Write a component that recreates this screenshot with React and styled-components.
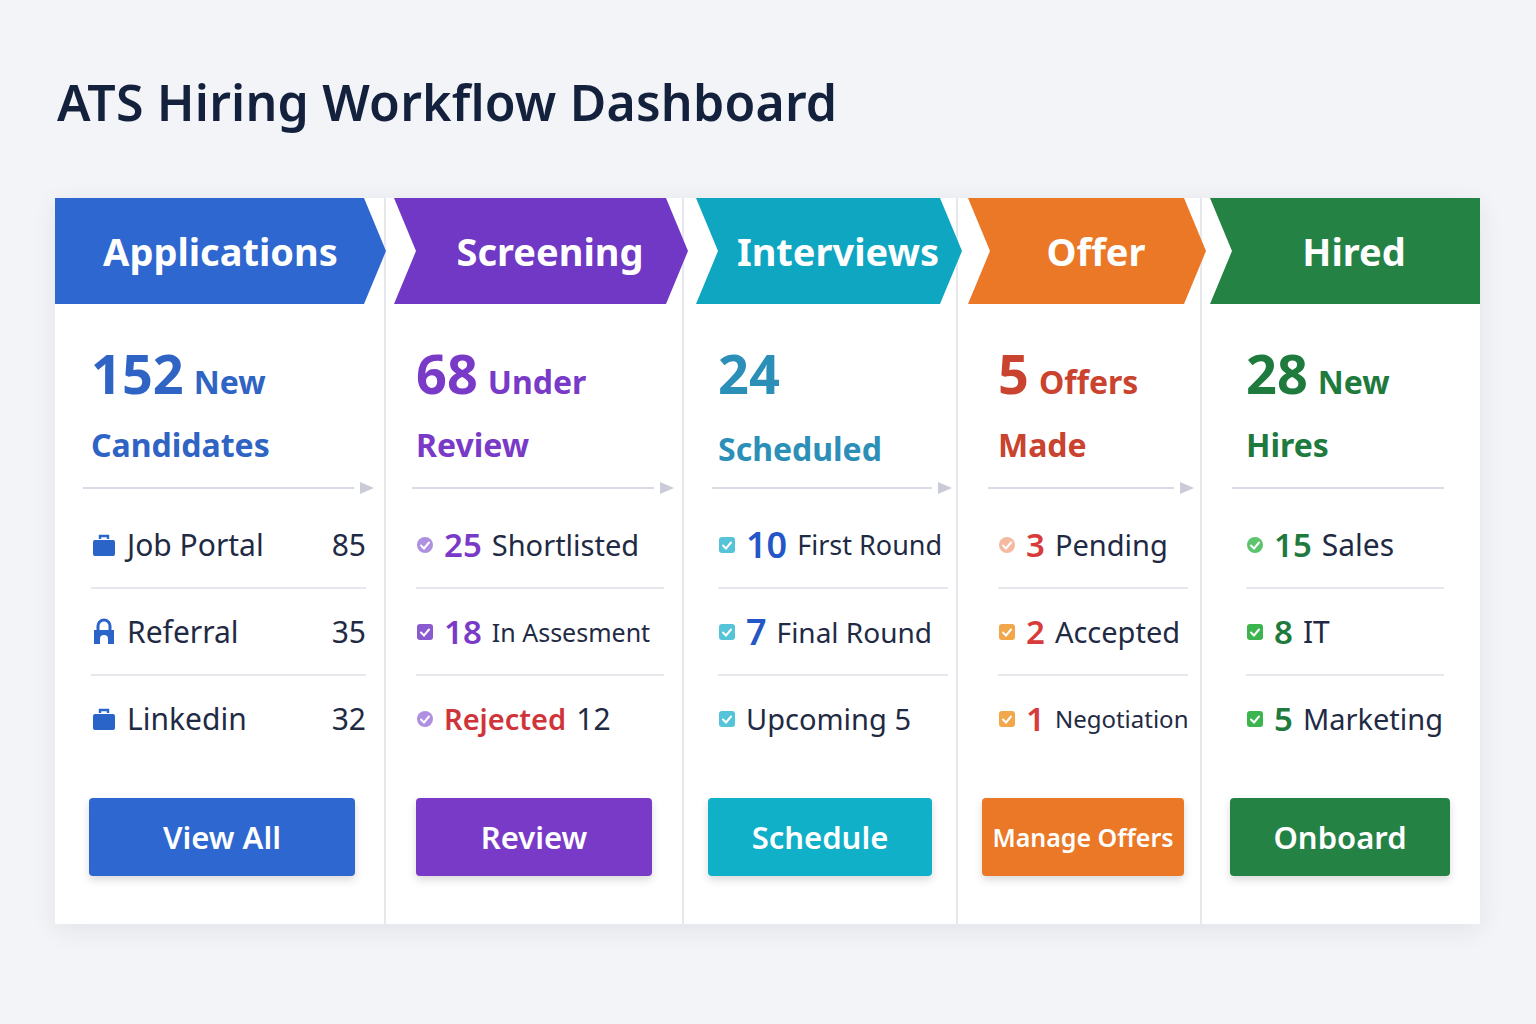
import React from "react";
import styled, { createGlobalStyle } from "styled-components";

const Global = createGlobalStyle`
  body { margin:0; background:#f3f4f7; font-family:"Noto Sans","Open Sans",sans-serif; }
`;
const Page = styled.div`width:1536px;height:1024px;padding:72px 56px 0 55px;box-sizing:border-box;`;
const Title = styled.h1`margin:0 0 66px 2px;font-size:50px;font-weight:600;color:#14213d;letter-spacing:0.2px;line-height:60px;`;
const Board = styled.div`display:flex;width:1425px;height:726px;background:#fff;box-shadow:0 6px 24px rgba(30,40,80,0.08);`;
const Col = styled.div`
  width:${p=>p.w}px;display:flex;flex-direction:column;
  border-right:${p=>p.last?"none":"2px solid #e6e8ee"};box-sizing:border-box;
`;
const Head = styled.div`
  height:106px;background:${p=>p.c};margin-left:${p=>p.ml}px;margin-right:${p=>p.mr}px;
  display:flex;align-items:center;justify-content:center;padding-left:${p=>p.pl}px;
  color:#fff;font-size:38px;font-weight:700;white-space:nowrap;
  clip-path:${p=>p.clip};
`;
const Body = styled.div`flex:1;display:flex;flex-direction:column;padding:38px ${p=>p.pr}px 48px ${p=>p.pl}px;`;
const Big = styled.div`color:${p=>p.c};font-weight:700;line-height:62px;height:124px;white-space:nowrap;`;
const Num = styled.span`font-size:54px;margin-right:10px;`;
const Word = styled.span`font-size:32px;`;
const Line2 = styled.div`font-size:32px;line-height:60px;margin-top:-4px;`;
const Divider = styled.div`display:flex;align-items:center;margin:12px ${p=>p.r}px 0 ${p=>p.l}px;height:20px;`;
const DLine = styled.div`flex:1;height:2px;background:#d8dbe3;`;
const Tri = styled.div`width:0;height:0;border-top:6px solid transparent;border-bottom:6px solid transparent;border-left:14px solid #c9ccd8;margin-left:6px;`;
const Rows = styled.div`margin-top:4px;display:flex;flex-direction:column;`;
const Row = styled.div`
  height:85px;display:flex;align-items:center;gap:10px;font-size:30px;color:#1f2a44;white-space:nowrap;
  border-bottom:${p=>p.last?"none":"2px solid #e6e8ee"};
`;
const Count = styled.span`margin-left:auto;`;
const Hi = styled.span`color:${p=>p.c};font-weight:600;font-size:${p=>p.s||33}px;`;
const Small = styled.span`font-size:${p=>p.s||30}px;`;
const Btn = styled.button`
  margin-top:auto;align-self:flex-start;width:${p=>p.w}px;height:78px;border:none;border-radius:4px;
  background:${p=>p.c};color:#fff;font-family:inherit;font-size:${p=>p.fs||31}px;font-weight:600;white-space:nowrap;
  box-shadow:0 4px 8px rgba(0,0,0,.15);margin-left:${p=>p.ml||0}px;
`;

const Check = ({c,o=1,round}) => (
  <svg width="18" height="18" viewBox="0 0 18 18" style={{flexShrink:0}}>
    {round ? <circle cx="9" cy="9" r="8" fill={c} opacity={o}/> : <rect x="1" y="1" width="16" height="16" rx="3" fill={c} opacity={o}/>}
    <path d="M5 9.5l3 3 5-6" stroke="#fff" strokeWidth="2" fill="none" strokeLinecap="round"/>
  </svg>
);
const Bag = () => (
  <svg width="26" height="26" viewBox="0 0 26 26"><path d="M9 7V4h8v3" stroke="#2b64c8" strokeWidth="2.4" fill="none"/><rect x="2" y="8" width="22" height="16" rx="2" fill="#2b64c8"/></svg>
);
const Lock = () => (
  <svg width="26" height="28" viewBox="0 0 26 28"><path d="M7 12V8a6 6 0 0112 0v4" stroke="#2b64c8" strokeWidth="3" fill="none"/><path d="M3 12h20v14h-6v-5a4 4 0 00-8 0v5H3z" fill="#2b64c8"/></svg>
);

const arrow = "polygon(0 0, calc(100% - 22px) 0, 100% 50%, calc(100% - 22px) 100%, 0 100%)";
const chev = "polygon(0 0, calc(100% - 22px) 0, 100% 50%, calc(100% - 22px) 100%, 0 100%, 22px 50%)";
const notch = "polygon(0 0, 100% 0, 100% 100%, 0 100%, 22px 50%)";

export default function App(){
  return (<><Global/><Page>
    <Title>ATS Hiring Workflow Dashboard</Title>
    <Board>
      <Col w={331}>
        <Head c="#2d67cf" ml={0} mr={-2} pl={0} clip={arrow}>Applications</Head>
        <Body pl={36} pr={18}>
          <Big c="#2f63c4"><Num>152</Num><Word>New</Word><Line2>Candidates</Line2></Big>
          <Divider l={-8} r={-8}><DLine/><Tri/></Divider>
          <Rows>
            <Row><Bag/>Job Portal<Count>85</Count></Row>
            <Row><Lock/>Referral<Count>35</Count></Row>
            <Row last><Bag/>Linkedin<Count>32</Count></Row>
          </Rows>
          <Btn c="#2d67cf" w={266} ml={-2}>View All</Btn>
        </Body>
      </Col>
      <Col w={298}>
        <Head c="#7038c4" ml={8} mr={-6} pl={18} clip={chev}>Screening</Head>
        <Body pl={30} pr={18}>
          <Big c="#7a3ac8"><Num>68</Num><Word>Under</Word><Line2>Review</Line2></Big>
          <Divider l={-4} r={-10}><DLine/><Tri/></Divider>
          <Rows>
            <Row><Check c="#9b74d8" o={0.8} round/><Hi c="#7a3ac8">25</Hi><Small s={29}>Shortlisted</Small></Row>
            <Row><Check c="#8a5ad0"/><Hi c="#7a3ac8">18</Hi><Small s={25}>In Assesment</Small></Row>
            <Row last><Check c="#9b74d8" o={0.8} round/><Hi c="#d0343b" s={29}>Rejected</Hi>12</Row>
          </Rows>
          <Btn c="#7a3ac8" w={236}>Review</Btn>
        </Body>
      </Col>
      <Col w={274}>
        <Head c="#0fa6c2" ml={12} mr={-6} pl={18} clip={chev}>Interviews</Head>
        <Body pl={34} pr={8}>
          <Big c="#2b8fb8"><Num>24</Num><Line2 style={{marginTop:0}}>Scheduled</Line2></Big>
          <Divider l={-6} r={-4}><DLine/><Tri/></Divider>
          <Rows>
            <Row><Check c="#55c3d8"/><Hi c="#2556c8" s={36}>10</Hi><Small s={27}>First Round</Small></Row>
            <Row><Check c="#55c3d8"/><Hi c="#2556c8" s={36}>7</Hi><Small s={28}>Final Round</Small></Row>
            <Row last><Check c="#55c3d8"/><Small s={29}>Upcoming 5</Small></Row>
          </Rows>
          <Btn c="#0fb0c8" w={224} ml={-10}>Schedule</Btn>
        </Body>
      </Col>
      <Col w={244}>
        <Head c="#ea7826" ml={10} mr={-6} pl={18} clip={chev}>Offer</Head>
        <Body pl={40} pr={12}>
          <Big c="#c9432e"><Num>5</Num><Word>Offers</Word><Line2>Made</Line2></Big>
          <Divider l={-10} r={-6}><DLine/><Tri/></Divider>
          <Rows>
            <Row><Check c="#f5b9a0" round/><Hi c="#d83b3b">3</Hi><Small s={29}>Pending</Small></Row>
            <Row><Check c="#f2a74a"/><Hi c="#d83b3b">2</Hi><Small s={29}>Accepted</Small></Row>
            <Row last><Check c="#f2a74a"/><Hi c="#d83b3b">1</Hi><Small s={24}>Negotiation</Small></Row>
          </Rows>
          <Btn c="#ea7826" w={202} ml={-16} fs={25}>Manage Offers</Btn>
        </Body>
      </Col>
      <Col w={278} last>
        <Head c="#248245" ml={8} mr={0} pl={18} clip={notch}>Hired</Head>
        <Body pl={44} pr={36}>
          <Big c="#1f7a3e"><Num>28</Num><Word>New</Word><Line2>Hires</Line2></Big>
          <Divider l={-14} r={0}><DLine/></Divider>
          <Rows>
            <Row><Check c="#5cc46c" round/><Hi c="#1f7a3e">15</Hi>Sales</Row>
            <Row><Check c="#3db54e"/><Hi c="#1f7a3e">8</Hi>IT</Row>
            <Row last><Check c="#3db54e"/><Hi c="#1f7a3e">5</Hi><Small s={29}>Marketing</Small></Row>
          </Rows>
          <Btn c="#248245" w={220} ml={-16}>Onboard</Btn>
        </Body>
      </Col>
    </Board>
  </Page></>);
}
